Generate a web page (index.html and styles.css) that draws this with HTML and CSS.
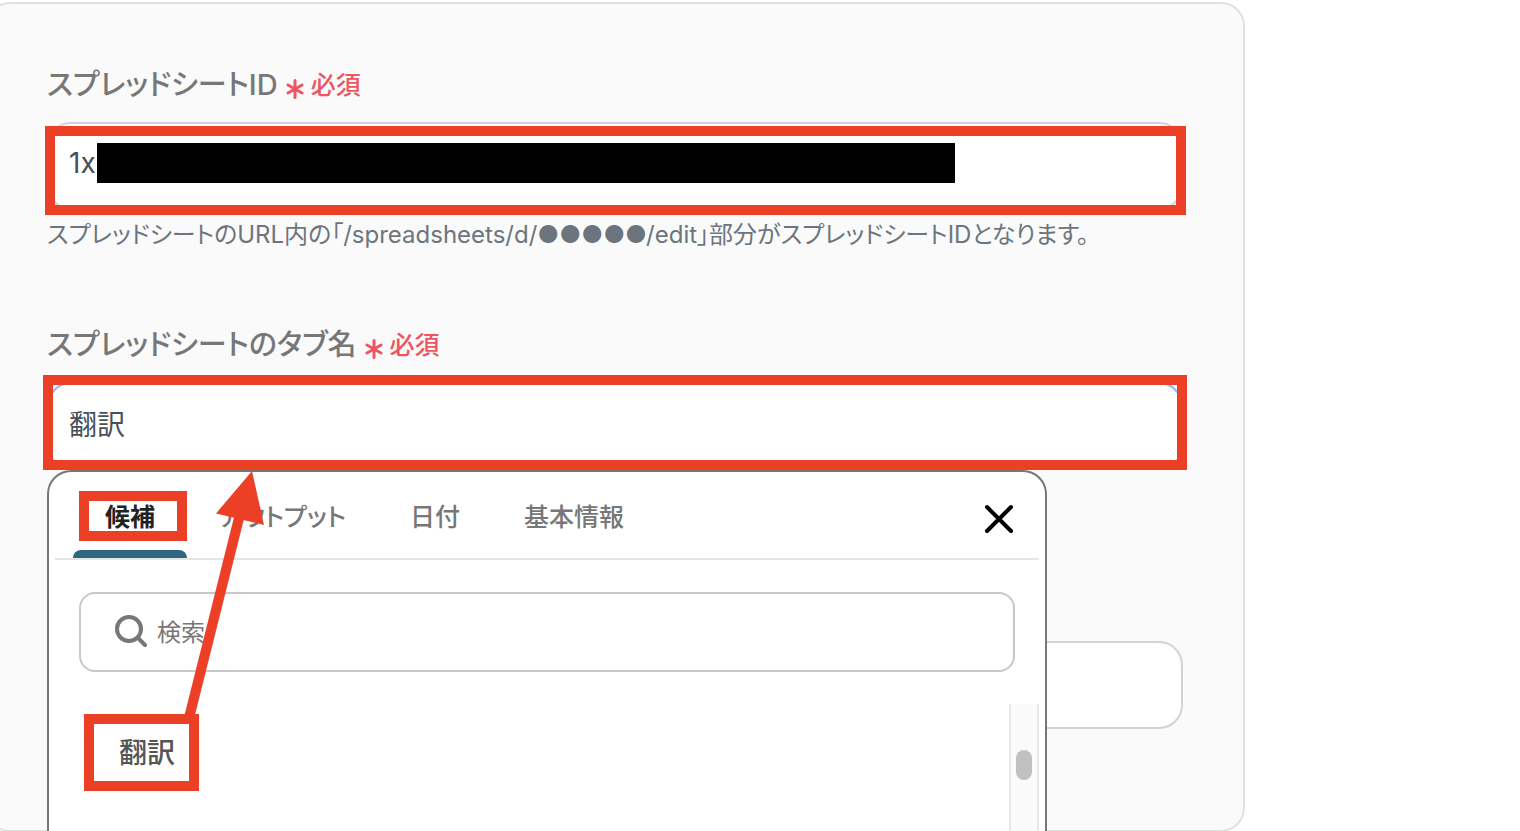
FILE: index.html
```html
<!DOCTYPE html>
<html lang="ja">
<head>
  <meta charset="UTF-8">
  <meta name="viewport" content="width=device-width, initial-scale=1.0">
  <title>スプレッドシート</title>
  <link rel="stylesheet" href="styles.css">
</head>
<body>
  <main class="page">
    <form class="card">
      <!-- Spreadsheet ID -->
      <div class="field">
        <div class="field-head">
          <label class="field-label" for="sheetId">スプレッドシートID</label>
          <svg class="asterisk" viewBox="0 0 18 20"><path d="M9 1.500v17M2 6l14 8M16 6L2 14"/></svg>
          <span class="required">必須</span>
        </div>
        <div class="control">
          <input class="text-input" type="text" id="sheetId" value="1x">
          <span class="redaction"></span>
          <span class="mark mark-id"></span>
        </div>
        <p class="help">スプレッドシートのURL内の「/spreadsheets/d/●●●●●/edit」部分がスプレッドシートIDとなります。</p>
      </div>

      <!-- Tab name with its suggestion menu -->
      <div class="field">
        <div class="field-head">
          <label class="field-label" for="tabName">スプレッドシートのタブ名</label>
          <svg class="asterisk" viewBox="0 0 18 20"><path d="M9 1.500v17M2 6l14 8M16 6L2 14"/></svg>
          <span class="required">必須</span>
        </div>
        <div class="control">
          <input class="text-input active" type="text" id="tabName" value="翻訳">
          <div class="menu">
            <div class="menu-head">
              <div class="tabs">
                <button type="button" class="tab current">候補<span class="mark mark-tab"></span></button>
                <button type="button" class="tab">アウトプット</button>
                <button type="button" class="tab">日付</button>
                <button type="button" class="tab">基本情報</button>
              </div>
              <button type="button" class="close" aria-label="閉じる">
                <svg viewBox="0 0 32 32"><path d="M4 4l24 24M28 4L4 28"/></svg>
              </button>
            </div>
            <div class="search">
              <svg class="search-icon" viewBox="0 0 34 34"><circle cx="16" cy="14" r="12"/><path d="M25 23l7 7"/></svg>
              <input class="search-input" type="search" placeholder="検索" aria-label="検索">
            </div>
            <div class="results">
              <div class="result-list">
                <button type="button" class="result">翻訳<span class="mark mark-result"></span></button>
              </div>
              <div class="scrollbar"><span class="thumb"></span></div>
            </div>
          </div>
          <span class="mark mark-name"></span>
          <svg class="arrow" viewBox="0 0 60 250"><path class="shaft" d="M18 248L69 44"/><path class="head" d="M81 1L45 43.500L93 55z"/></svg>
        </div>
      </div>

      <div class="field field-plain">
        <input class="text-input" type="text" aria-label="入力">
      </div>
    </form>
  </main>
</body>
</html>
```
FILE: styles.css
```css
* {
  box-sizing: border-box;
}
body {
  margin: 0;
  height: 100vh;
  overflow: hidden;
  background: #fff;
  font-family: Inter, "Noto Sans CJK JP", sans-serif;
  font-feature-settings: "palt";
}
input,
button {
  font: inherit;
  font-feature-settings: inherit;
}
.page {
  padding: 2px 275px 0 0;
}
/* The card runs past the left edge of the window */
.card {
  display: grid;
  grid-auto-rows: 1fr;
  row-gap: 75px;
  margin-left: -14px;
  padding: 61px 60px 60px 59px;
  background: #fafafa;
  border: 2px solid #dee2e6;
  border-radius: 24px;
}
.field-head {
  display: flex;
  align-items: center;
  height: 40px;
  margin-bottom: 17px;
}
.field-label {
  font-size: 29px;
  font-weight: 500;
  line-height: 40px;
  color: #777;
}
.asterisk {
  width: 18px;
  height: 20px;
  margin: 7px 7px 0 8px;
  fill: none;
  stroke: #ee5560;
  stroke-width: 3;
  stroke-linecap: round;
}
.required {
  font-size: 25px;
  font-weight: 500;
  line-height: 40px;
  color: #ee5560;
}
.control {
  position: relative;
}
.text-input {
  display: block;
  width: 100%;
  height: 88px;
  padding: 0 20px 6px;
  font-size: 28px;
  color: #495057;
  background: #fff;
  border: 2px solid #ced4da;
  border-radius: 24px;
}
.text-input.active {
  border-color: #86b7fe;
}
.help {
  margin: 10px 0 0;
  font-size: 24px;
  line-height: 30px;
  color: #6c757d;
  white-space: nowrap;
}
.field-plain {
  padding-top: 56px;
}
.redaction {
  position: absolute;
  top: 21px;
  left: 50px;
  right: 228px;
  height: 40px;
  background: #000;
}

/* Suggestion menu */
.menu {
  position: absolute;
  top: 88px;
  left: 0;
  width: 88%;
  padding: 0 6px;
  background: #fff;
  border: 2px solid #777;
  border-bottom: 0;
  border-radius: 24px 24px 0 0;
}
.menu-head {
  display: flex;
  justify-content: space-between;
  align-items: center;
  height: 88px;
  padding: 0 24px 0 18px;
  border-bottom: 2px solid #e5e5e5;
}
.tabs {
  display: flex;
  height: 100%;
}
.tab {
  position: relative;
  padding: 0 32px;
  border: 0;
  background: none;
  font-size: 25px;
  font-weight: 500;
  color: #777;
}
.tab.current {
  color: #222;
  font-weight: 700;
}
.tab.current::after {
  content: "";
  position: absolute;
  left: 0;
  right: 0;
  bottom: 0;
  height: 8px;
  background: #2f6780;
  border-radius: 8px 8px 0 0;
}
.close {
  padding: 0;
  width: 32px;
  height: 32px;
  margin-top: 8px;
  border: 0;
  background: none;
}
.close svg {
  display: block;
  width: 32px;
  height: 32px;
  fill: none;
  stroke: #000;
  stroke-width: 4;
  stroke-linecap: round;
}
.search {
  display: flex;
  align-items: center;
  height: 80px;
  margin: 32px 24px;
  padding: 0 32px;
  border: 2px solid #c8c8c8;
  border-radius: 16px;
}
.search-icon {
  width: 34px;
  height: 34px;
  fill: none;
  stroke: #777;
  stroke-width: 4;
  stroke-linecap: round;
}
.search-input {
  flex: 1;
  padding: 0;
  margin-left: 10px;
  border: 0;
  outline: 0;
  background: none;
  font-size: 24px;
}
.search-input::placeholder {
  color: #777;
}
.results {
  display: flex;
  justify-content: space-between;
  height: 127px;
}
.result {
  position: relative;
  height: 96px;
  padding: 0 64px 2px;
  border: 0;
  background: none;
  font-size: 28px;
  font-weight: 500;
  color: #555;
}
.scrollbar {
  width: 30px;
  padding: 46px 5px 0;
  background: #fafafa;
  border: solid #e8e8e8;
  border-width: 0 2px;
}
.thumb {
  display: block;
  height: 30px;
  border-radius: 8px;
  background: #c1c1c1;
}

/* Red marks drawn over the form */
.mark {
  position: absolute;
  z-index: 2;
  border: 10px solid #eb4025;
  pointer-events: none;
}
.mark-id {
  inset: 4px -3px -5px -2px;
}
.mark-name {
  inset: -7px -4px 0;
}
.mark-tab {
  inset: 19px 0 17px 6px;
}
.mark-result {
  inset: 10px 40px 9px 29px;
}
.arrow {
  position: absolute;
  z-index: 3;
  top: 88px;
  left: 124px;
  width: 60px;
  height: 250px;
  overflow: visible;
}
.shaft {
  stroke: #eb4025;
  stroke-width: 10;
}
.head {
  fill: #eb4025;
}
```
